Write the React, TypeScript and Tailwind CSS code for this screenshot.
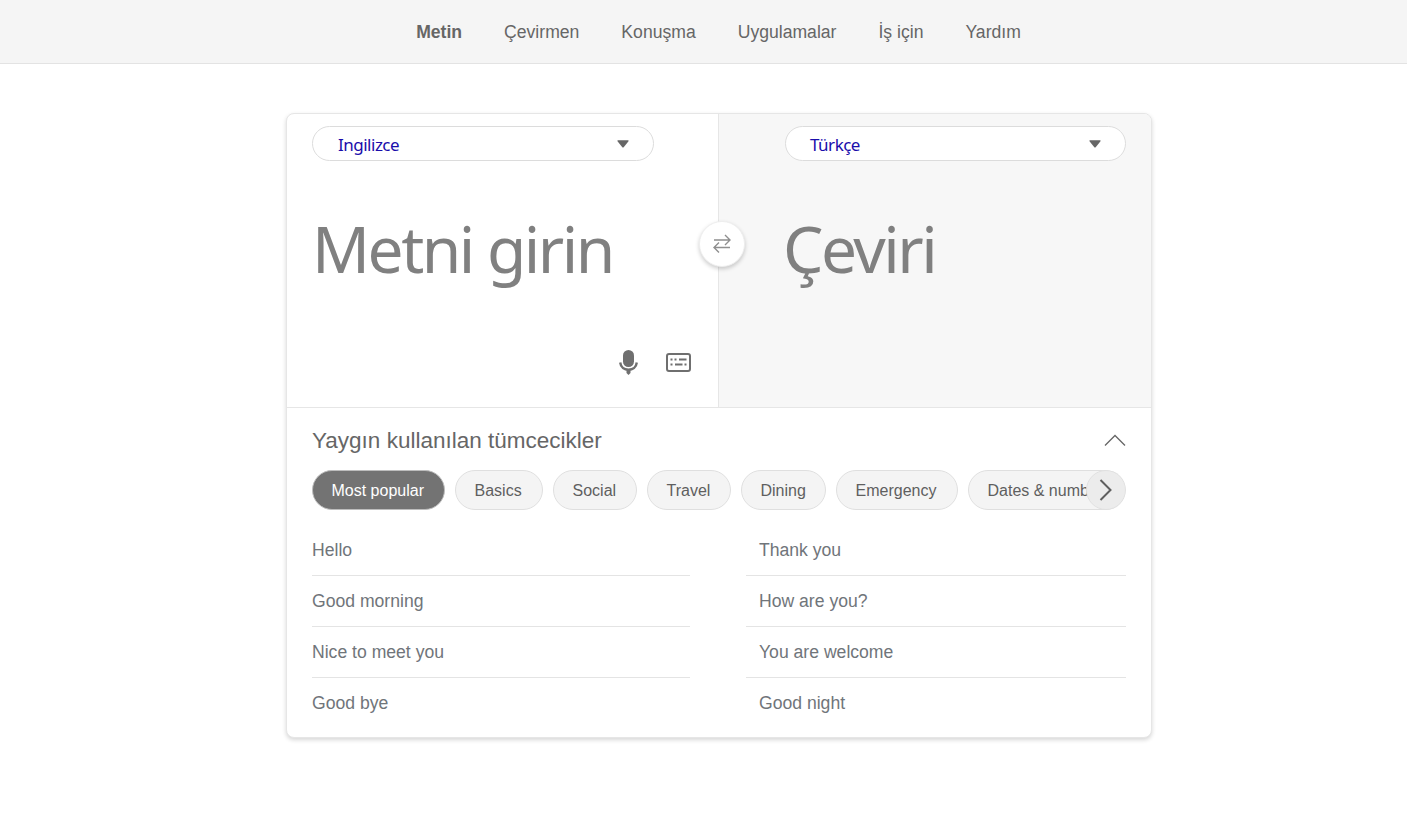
import React from 'react';

const navItems = ['Metin', 'Çevirmen', 'Konuşma', 'Uygulamalar', 'İş için', 'Yardım'];
const chips = [
  { label: 'Most popular', width: 'w-[133px]' },
  { label: 'Basics', width: 'w-[88px]' },
  { label: 'Social', width: 'w-[84px]' },
  { label: 'Travel', width: 'w-[84px]' },
  { label: 'Dining', width: 'w-[85px]' },
  { label: 'Emergency', width: 'w-[122px]' },
  { label: 'Dates & numbers', width: 'w-[160px]' },
];
const leftPhrases = ['Hello', 'Good morning', 'Nice to meet you', 'Good bye'];
const rightPhrases = ['Thank you', 'How are you?', 'You are welcome', 'Good night'];

const LangSelect: React.FC<{ label: string; className: string }> = ({ label, className }) => (
  <div className={`h-[35px] rounded-full border border-[#dcdcdc] bg-white flex items-center justify-between pr-[24px] ${className}`}>
    <span className="text-[17px] text-[#1a0dab] font-['Noto_Sans',sans-serif] tracking-[-0.5px] leading-none pt-[2px]">{label}</span>
    <svg width="12" height="8" viewBox="0 0 12 8">
      <path d="M0.3 1 Q0.3 0.2 1 0.2 H11 Q11.7 0.2 11.7 1 L6.7 7.2 Q6 8 5.3 7.2 Z" fill="#666" />
    </svg>
  </div>
);

const PhraseColumn: React.FC<{ phrases: string[]; className: string; rowClass?: string }> = ({ phrases, className, rowClass = '' }) => (
  <div className={className}>
    {phrases.map((p, i) => (
      <div key={p} className={`h-[51px] flex items-center text-[17.6px] text-[#70757a] ${rowClass} ${i < phrases.length - 1 ? 'border-b border-[#e4e4e4]' : ''}`}>
        {p}
      </div>
    ))}
  </div>
);

const App: React.FC = () => {
  return (
    <div className="min-h-[820px] bg-white font-['Liberation_Sans',sans-serif]">
      <nav className="h-[64px] pl-[30px] pt-[2px] bg-[#f5f5f5] border-b border-[#e3e3e3] flex items-center justify-center gap-[42px] text-[17.6px] text-[#666]">
        {navItems.map((item, i) => (
          <span key={item} className={i === 0 ? 'font-bold' : ''}>{item}</span>
        ))}
      </nav>

      <div className="pl-[31px] pt-[49px]">
        <main className="w-[866px] mx-auto bg-white border border-[#e6e6e6] rounded-[8px] shadow-[0_2px_4px_rgba(0,0,0,0.16)] overflow-hidden relative">
          <div className="h-[294px] flex border-b border-[#e6e6e6]">
            <section className="w-[432px] border-r border-[#e6e6e6] pt-[12px] pl-[25px] flex flex-col">
              <LangSelect label="Ingilizce" className="w-[342px] pl-[25px]" />
              <div className="mt-[44px] text-[64px] leading-[88px] font-normal tracking-[-2.5px] text-[#808080] font-['Noto_Sans',sans-serif]">Metni girin</div>
              <div className="mt-auto mb-[32px] flex items-center justify-end gap-[28px] pr-[27px]">
                <svg width="19" height="25" viewBox="0 0 19 25">
                  <rect x="4" y="0" width="11" height="17" rx="5.5" fill="#6f6f6f" />
                  <path d="M1.2 12.5 C1.8 17.5 5.5 19.8 9.5 19.8 C13.5 19.8 17.2 17.5 17.8 12.5" fill="none" stroke="#6f6f6f" strokeWidth="2.4" />
                  <path d="M7.5 19 H11.5 V23 L9.5 25 L7.5 23 Z" fill="#6f6f6f" />
                </svg>
                <svg width="25" height="19" viewBox="0 0 25 19">
                  <rect x="1" y="1" width="23" height="17" rx="2" fill="none" stroke="#6f6f6f" strokeWidth="2" />
                  <path d="M4.5 6.5 H6.5 M8.5 6.5 H10.5 M13 6.5 H20.5 M4.5 11.5 H6.5 M9 11.5 H16.5 M18.5 11.5 H20.5" stroke="#6f6f6f" strokeWidth="1.8" />
                </svg>
              </div>
            </section>
            <section className="flex-1 bg-[#f7f7f7] pt-[12px] pl-[66px]">
              <LangSelect label="Türkçe" className="w-[341px] pl-[24px]" />
              <div className="mt-[44px] -ml-[2px] text-[64px] leading-[88px] font-normal tracking-[-2.5px] text-[#808080] font-['Noto_Sans',sans-serif]">Çeviri</div>
            </section>
          </div>

          {/* swap button sits over the panel divider */}
          <button className="absolute left-[412px] top-[107px] w-[46px] h-[46px] rounded-full bg-white border border-[#eee] shadow-[0_2px_4px_rgba(0,0,0,0.2)] flex items-center justify-center">
            <svg width="20" height="20" viewBox="0 0 20 20" fill="none" stroke="#8f8f8f" strokeWidth="1.4">
              <path d="M2 6 H18 M13 1 L18 6 L13 11" />
              <path d="M18 13.5 H2 M7 8.5 L2 13.5 L7 18.5" />
            </svg>
          </button>

          <div className="px-[25px] pb-[8px]">
            <div className="h-[62px] flex items-center justify-between">
              <h2 className="text-[22.5px] text-[#666] font-normal pt-[4px]">Yaygın kullanılan tümcecikler</h2>
              <svg width="22" height="12" viewBox="0 0 22 12" className="mt-[2px]">
                <path d="M1 11.5 L11 1.5 L21 11.5" fill="none" stroke="#666" strokeWidth="1.3" />
              </svg>
            </div>

            <div className="relative w-[814px] h-[40px] overflow-hidden rounded-r-full">
              <div className="flex gap-[10px] whitespace-nowrap">
                {chips.map((chip, i) => (
                  <div
                    key={chip.label}
                    className={`h-[40px] shrink-0 rounded-full flex items-center pl-[18.5px] pt-[2px] text-[16px] border ${chip.width} ${
                      i === 0 ? 'bg-[#737373] border-[#bdbdbd] text-white' : 'bg-[#f4f4f4] border-[#dfdfdf] text-[#5f5f5f]'
                    }`}
                  >
                    {chip.label}
                  </div>
                ))}
              </div>
              <div className="absolute right-0 top-0 w-[40px] h-[40px] rounded-full bg-[#ececec] border border-[#e0e0e0] flex items-center justify-center">
                <svg width="13" height="22" viewBox="0 0 13 22" className="mr-[1px]">
                  <path d="M1.5 1 L11.5 11 L1.5 21" fill="none" stroke="#5f5f5f" strokeWidth="2" />
                </svg>
              </div>
            </div>

            <div className="mt-[15px] flex justify-between">
              <PhraseColumn phrases={leftPhrases} className="w-[378px]" />
              <PhraseColumn phrases={rightPhrases} className="w-[380px]" rowClass="pl-[13px]" />
            </div>
          </div>
        </main>
      </div>
    </div>
  );
};

export default App;
